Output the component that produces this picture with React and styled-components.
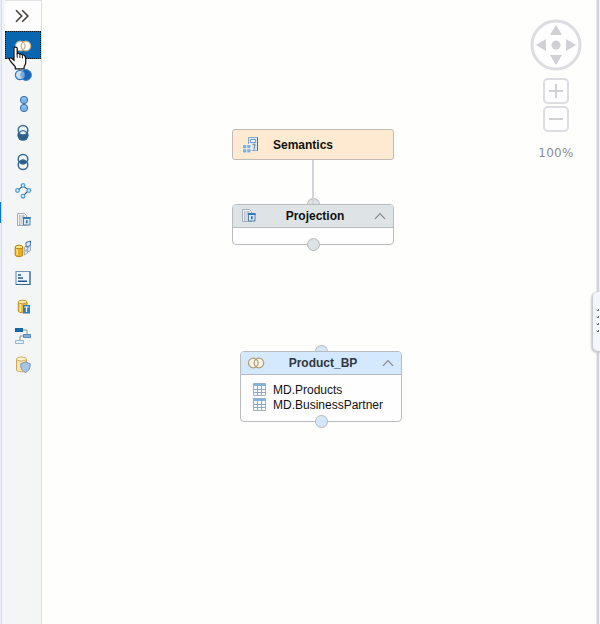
import React from "react";
import styled, { createGlobalStyle } from "styled-components";

const GlobalStyle = createGlobalStyle`
  * { box-sizing: border-box; }
  body { margin: 0; background: #fefefd; font-family: "Liberation Sans", Arial, sans-serif; }
`;

const Editor = styled.div`
  position: relative;
  display: flex;
  width: 600px;
  height: 624px;
  overflow: hidden;
  background: #fefefd;
`;

const Gutter = styled.div`
  display: flex;
  flex-direction: column;
  width: 5px;
  padding-top: 202px;
  background: linear-gradient(90deg, #e9eef7 0 1px, #d3dbea 1px 2px, #f3f5fa 2px);
`;

const GutterMarker = styled.div`
  width: 1px;
  height: 21px;
  background: #0a78c8;
`;

const Palette = styled.nav`
  display: flex;
  flex-direction: column;
  width: 37px;
  background: #f4f5f5;
  border-right: 1px solid #dcdddf;
`;

const ExpandButton = styled.button`
  display: flex;
  align-items: center;
  justify-content: center;
  height: 31px;
  padding: 0 2px 1px 0;
  border: 0;
  border-top: 1px solid #e0e2e5;
  background: #fdfdfd;
`;

const ToolButton = styled.button`
  display: flex;
  flex: none;
  align-items: center;
  justify-content: center;
  height: 28px;
  margin-bottom: 1px;
  padding: 2px 0 0;
  border: ${(p) => (p.$active ? "1px dotted #101820" : "1px solid transparent")};
  background: ${(p) => (p.$active ? "#0866b0" : "transparent")};
`;

const Cursor = styled.svg`
  position: absolute;
  left: 8px;
  top: 46px;
`;

const Canvas = styled.main`
  position: relative;
  flex: 1;
`;

const SemanticsNode = styled.section`
  position: absolute;
  left: 190px;
  top: 129px;
  display: flex;
  align-items: center;
  gap: 14px;
  width: 162px;
  height: 31px;
  padding-left: 9px;
  border: 1px solid #c2bab5;
  border-radius: 3px;
  background: #feead0;
`;

const Node = styled.section`
  position: absolute;
  left: ${(p) => p.$x}px;
  top: ${(p) => p.$y}px;
  width: 162px;
  height: ${(p) => p.$h}px;
  border: 1px solid #b9bbbe;
  border-radius: 4px;
  background: #fefefe;
`;

const NodeHeader = styled.header`
  display: flex;
  align-items: center;
  justify-content: space-between;
  height: 23px;
  padding: 0 6px;
  border-bottom: 1px solid #b9bbbe;
  border-radius: 3px 3px 0 0;
  background: ${(p) => p.$color};
`;

const Title = styled.h2`
  margin: 0;
  font-size: 12px;
  line-height: 16px;
  font-weight: 700;
  color: ${(p) => p.$color || "#111"};
`;

const Sources = styled.ul`
  margin: 0;
  padding: 7px 0 0 12px;
  list-style: none;
`;

const Source = styled.li`
  display: flex;
  align-items: center;
  gap: 7px;
  height: 15px;
  font-size: 12px;
  color: #111;
  white-space: nowrap;
`;

const Port = styled.span`
  position: absolute;
  left: ${(p) => p.$x}px;
  top: ${(p) => p.$y}px;
  width: 13px;
  height: ${(p) => (p.$half ? 7 : 13)}px;
  border: 1px solid #b6b9bc;
  border-bottom-width: ${(p) => (p.$half ? 0 : 1)}px;
  border-radius: ${(p) => (p.$half ? "7px 7px 0 0" : "50%")};
  background: ${(p) => p.$color};
`;

const Link = styled.span`
  position: absolute;
  left: 270px;
  top: 160px;
  width: 2px;
  height: 44px;
  background: #d3d3d9;
`;

const Navigator = styled.aside`
  position: absolute;
  left: 487px;
  top: 19px;
  display: flex;
  flex-direction: column;
  align-items: center;
  width: 54px;
`;

const ZoomButton = styled.button`
  display: flex;
  align-items: center;
  justify-content: center;
  width: 26px;
  height: 26px;
  margin-top: ${(p) => p.$gap}px;
  padding: 0;
  border: 2px solid #dddce0;
  border-radius: 5px;
  background: #fefefe;
`;

const ZoomLevel = styled.span`
  margin-top: 13px;
  font-family: "DejaVu Sans", sans-serif;
  font-size: 12px;
  line-height: 16px;
  letter-spacing: 0.3px;
  color: #8c8c90;
`;

const Splitter = styled.div`
  display: flex;
  align-items: flex-start;
  width: 4px;
  background: linear-gradient(90deg, #e8e8eb 0 1px, #d2d3d6 1px 3px, #eef2fa 3px);
`;

const SplitterGrip = styled.div`
  position: absolute;
  left: 593px;
  top: 292px;
  display: flex;
  flex-direction: column;
  gap: 5px;
  width: 12px;
  height: 59px;
  padding: 17px 0 0 3px;
  border-radius: 5px;
  background: #f3f6fd;
  box-shadow: -1px 1px 2px 1px #c9cace;
`;

const GripDot = styled.i`
  width: 3px;
  height: 2px;
  background: linear-gradient(135deg, #d9dce2 45%, #6f747b 60%);
`;

const Icon = ({ children, size = 18 }) => (
  <svg width={size} height={size} viewBox="0 0 18 18" fill="none">{children}</svg>
);

const JoinIcon = ({ filled }) => {
  const outline = filled ? "#c9b084" : "#b09c74";
  return (
    <Icon>
      <circle cx="6.3" cy="9" r="4.8" fill={filled ? "#fff" : "#f8f4e8"} />
      <circle cx="11.9" cy="9" r="4.8" fill={filled ? "#fff" : "#f8f4e8"} />
      <circle cx="6.3" cy="9" r="4.8" stroke={outline} strokeWidth="1.2" />
      <circle cx="11.9" cy="9" r="4.8" stroke={outline} strokeWidth="1.2" />
    </Icon>
  );
};

const UnionIcon = () => (
  <Icon>
    <circle cx="12" cy="9" r="5.4" fill="#1766b5" stroke="#347fc4" />
    <circle cx="6" cy="9" r="4.6" fill="#b8d2ec" fillOpacity=".65" stroke="#2e78bd" strokeWidth="1.2" />
    <path d="M8.6 5.4a4.8 4.8 0 0 1 0 7.2" stroke="#73a9d9" />
  </Icon>
);

const StackIcon = () => (
  <Icon>
    <g fill="#74b2e8" stroke="#4478ab">
      <circle cx="10" cy="5" r="3.7" />
      <circle cx="10" cy="13" r="3.7" />
    </g>
    <path d="M8.5 3.8q1.5-1 3 0M8.5 11.8q1.5-1 3 0" stroke="#a4d3fa" />
  </Icon>
);

const MinusSetIcon = () => (
  <Icon>
    <circle cx="9" cy="11.2" r="5.6" fill="#2d608a" />
    <circle cx="9" cy="6.2" r="4.8" fill="#edf4f8" stroke="#376c94" strokeWidth="1.5" />
    <path d="M5.2 8.8a4.4 4.4 0 0 1 7.6 0" stroke="#376c94" strokeWidth="1.4" />
  </Icon>
);

const IntersectIcon = () => (
  <Icon>
    <circle cx="9" cy="6.2" r="4.8" fill="#f3f7f9" />
    <circle cx="9" cy="11.8" r="4.8" fill="#f3f7f9" />
    <path d="M4.8 9Q9 4.7 13.2 9Q9 13.3 4.8 9Z" fill="#285b86" />
    <g stroke="#376c94" strokeWidth="1.5">
      <circle cx="9" cy="6.2" r="4.8" />
      <circle cx="9" cy="11.8" r="4.8" />
    </g>
  </Icon>
);

const GraphIcon = () => (
  <Icon>
    <path d="M4 8L9 4L15 8L9 14" stroke="#4b6672" strokeWidth="1.2" />
    <g fill="#ddf2fd" stroke="#51a1d4" strokeWidth="1.3">
      <circle cx="3.5" cy="8.5" r="1.8" />
      <circle cx="9" cy="3.5" r="1.8" />
      <circle cx="14.8" cy="8.5" r="1.8" />
      <circle cx="9" cy="14.2" r="1.8" />
    </g>
  </Icon>
);

const ProjectionIcon = () => (
  <Icon>
    <path d="M3.5 2.5h7l2 2v10h-9z" fill="#f1f2f3" stroke="#a6adb6" />
    <path d="M5 5h1.5m1 0h3M5 7h1.5m1 0h2M5 9h1.5m1 0h1M5 11h1.5m1 0h1M5 13h1.5m1 0h1" stroke="#84909d" />
    <path d="M9.5 6.5h6.5v7.5h-6.5z" fill="#d5e8f8" stroke="#4f82ae" />
    <path d="M9 7h7.5" stroke="#3479b1" strokeWidth="2" />
    <path d="M12.8 9.3v3" stroke="#416c92" strokeWidth="1.6" />
  </Icon>
);

const AggregationIcon = () => (
  <Icon>
    <path d="M1.2 7v8c0 2.1 7.6 2.1 7.6 0V7" fill="#eaae25" stroke="#b48218" />
    <path d="M3.2 8v7" stroke="#ffe391" strokeWidth="1.5" />
    <ellipse cx="5" cy="7" rx="3.8" ry="1.8" fill="#ffe67d" stroke="#b48218" />
    <path d="M10.5 7l3-2v4l-3 2zM10.5 12l3-2v3l-3 2z" fill="#e6e8ec" stroke="#9eabba" strokeWidth=".9" />
    <path d="M12 2.5l4.5-1.5v4.5L12 7z" fill="#d3e9fc" stroke="#47739d" />
    <path d="M13.7 7.5l2.8-1v4l-2.8 1.5z" fill="#e3edf7" stroke="#8ba2bd" strokeWidth=".9" />
  </Icon>
);

const RankIcon = () => (
  <Icon>
    <path d="M2 2.5h14v13H2z" fill="#edf7ff" stroke="#7298bc" strokeWidth="1.2" />
    <path d="M16 2.5v13H2" stroke="#3b6189" />
    <path d="M4 6h3M4 9h5M4 12.3h9" stroke="#24588c" strokeWidth="1.6" />
  </Icon>
);

const TableFunctionIcon = () => (
  <Icon>
    <path d="M4.3 4v9c0 2.2 8.7 2.2 8.7 0V4" fill="#efb934" stroke="#bd8d24" />
    <path d="M6.3 5v9" stroke="#ffe79a" strokeWidth="1.5" />
    <ellipse cx="8.6" cy="4" rx="4.3" ry="1.8" fill="#ffeaa0" stroke="#c49a3b" />
    <path d="M9 7h7v8.5H9z" fill="#2c7fc3" />
    <path d="M10.3 9h4.4M12.5 9v5" stroke="#fff" strokeWidth="1.2" />
  </Icon>
);

const HierarchyIcon = () => (
  <Icon>
    <path d="M9 3h4v4M9 9H6v5" stroke="#8b9399" />
    <path d="M1 1h8v4H1z" fill="#1667aa" />
    <path d="M9.5 7.5h7v3h-7z" fill="#80b1dd" stroke="#5689ba" />
    <path d="M1.5 13.5h8v3h-8z" fill="#e4f3ff" stroke="#98b6cf" />
  </Icon>
);

const ShieldIcon = () => (
  <Icon>
    <path d="M2.5 3v11c0 2.3 10 2.3 10 0V3" fill="#fae4a6" stroke="#c9a767" />
    <ellipse cx="7.5" cy="3" rx="5" ry="2" fill="#fff3cb" stroke="#cdac6d" />
    <path d="M11.5 6l4.7 1.7c.3 4.6-1.5 7.4-4.7 8.8-3.3-1.4-5.2-4.2-4.7-8.8z" fill="#a6c5e5" stroke="#7798bd" />
  </Icon>
);

const CalculatorIcon = () => (
  <svg width="17" height="18" viewBox="0 0 17 18" fill="none">
    <path d="M6.5 1.5h9v13h-9z" fill="#dce9f4" stroke="#88a9cb" />
    <path d="M15.5 1.5v13" stroke="#3d6da4" />
    <path d="M8.5 3.5h5v3h-5z" fill="#eef8ff" stroke="#6c9ecb" />
    <path d="M10.5 8.5h2.5l-1 5" stroke="#8798ab" strokeWidth="1.3" />
    <path d="M0 8h9.5v9H0z" fill="#fdf3e5" />
    <path d="M1 9h3.3v3.3H1zM5.2 9h3.3v3.3H5.2zM1 13.2h3.3v3.3H1zM5.2 13.2h3.3v3.3H5.2z" fill="#7caee0" />
  </svg>
);

const TableIcon = () => (
  <svg width="13" height="13" viewBox="0 0 13 13" fill="none">
    <path d="M.5.5h12v12H.5z" fill="#f6fbff" stroke="#a3afbb" />
    <path d="M.5 .5h12v2.5H.5z" fill="#82b2de" />
    <path d="M4.5 1v11M8.5 1v11M1 6.5h11M1 9.5h11" stroke="#91a9c0" />
  </svg>
);

const Caret = () => (
  <svg width="14" height="10" viewBox="0 0 14 10" fill="none">
    <path d="M2 7.8L7 2.5L12 7.8" stroke="#858a8e" strokeWidth="1.2" />
  </svg>
);

const TOOLS = [
  ["Join", () => <JoinIcon filled />],
  ["Union", UnionIcon],
  ["Non-equi join", StackIcon],
  ["Minus", MinusSetIcon],
  ["Intersect", IntersectIcon],
  ["Graph", GraphIcon],
  ["Projection", ProjectionIcon],
  ["Aggregation", AggregationIcon],
  ["Rank", RankIcon],
  ["Table function", TableFunctionIcon],
  ["Hierarchy", HierarchyIcon],
  ["Anonymization", ShieldIcon],
];

export default function App() {
  return (
    <Editor>
      <GlobalStyle />
      <Gutter><GutterMarker /></Gutter>
      <Palette>
        <ExpandButton aria-label="Expand palette">
          <svg width="14" height="14" viewBox="0 0 14 14" fill="none">
            <path d="M1 1.3L6.7 7L1 12.7M7.2 1.3L12.9 7L7.2 12.7" stroke="#46403e" strokeWidth="1.6" />
          </svg>
        </ExpandButton>
        {TOOLS.map(([name, Drawing], i) => (
          <ToolButton key={name} aria-label={name} $active={i === 0}><Drawing /></ToolButton>
        ))}
      </Palette>
      <Canvas>
        <Port $x={264.5} $y={198} $half $color="#dde3e5" />
        <Link />
        <SemanticsNode>
          <CalculatorIcon />
          <Title>Semantics</Title>
        </SemanticsNode>
        <Node $x={190} $y={204} $h={41}>
          <NodeHeader $color="#dee4e6">
            <ProjectionIcon />
            <Title>Projection</Title>
            <Caret />
          </NodeHeader>
        </Node>
        <Port $x={264.5} $y={238} $color="#dde3e5" />
        <Port $x={272.5} $y={345} $half $color="#d5e8fb" />
        <Node $x={198} $y={351} $h={71}>
          <NodeHeader $color="#d4e9fd">
            <JoinIcon />
            <Title $color="#30373e">Product_BP</Title>
            <Caret />
          </NodeHeader>
          <Sources>
            <Source><TableIcon />MD.Products</Source>
            <Source><TableIcon />MD.BusinessPartner</Source>
          </Sources>
        </Node>
        <Port $x={272.5} $y={415} $color="#d5e8fb" />
        <Navigator>
          <svg width="52" height="52" viewBox="0 0 52 52">
            <circle cx="26" cy="26" r="24" fill="#fefefe" stroke="#dddce0" strokeWidth="3" />
            <circle cx="26" cy="26" r="4.5" fill="#d1d0d4" />
            <path d="M26 6l6 10H20zM26 46l6-10H20zM6 26l10-6v12zM46 26l-10-6v12z" fill="#d1d0d4" />
          </svg>
          <ZoomButton $gap={7} aria-label="Zoom in">
            <svg width="16" height="16" viewBox="0 0 16 16"><path d="M1 8h14M8 1v14" stroke="#d1d0d4" strokeWidth="2" /></svg>
          </ZoomButton>
          <ZoomButton $gap={2} aria-label="Zoom out">
            <svg width="16" height="16" viewBox="0 0 16 16"><path d="M1 8h14" stroke="#d1d0d4" strokeWidth="2" /></svg>
          </ZoomButton>
          <ZoomLevel>100%</ZoomLevel>
        </Navigator>
      </Canvas>
      <Splitter />
      <SplitterGrip><GripDot /><GripDot /><GripDot /><GripDot /></SplitterGrip>
      <Cursor width="19" height="25" viewBox="0 0 19 25">
        <path d="M6 2.6C6 .6 9.2.6 9.2 2.6v5c.8-.6 2.2-.4 2.7.7.8-.6 2.1-.3 2.5.8 1-.5 2 0 2.4.9.6.7.9 1.6.9 2.8v4c0 1.7-1.1 2.7-1.6 4.1v2H7.3v-2.1c-1.6-1.9-3.8-4-5.5-6.6-1.2-1.8.2-3 1.9-1.8L6 14.3z" fill="#fff" stroke="#111" strokeWidth="1.2" />
        <path d="M9.2 7.5v4.3M11.9 8.5v3.5M14.4 9.3v3.2" stroke="#222" />
      </Cursor>
    </Editor>
  );
}
